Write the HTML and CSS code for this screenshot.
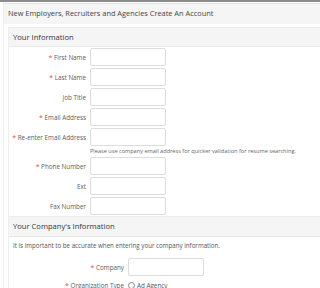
FILE: index.html
```html
<!DOCTYPE html>
<html>
<head>
<meta charset="utf-8">
<link rel="stylesheet" href="styles.css">
</head>
<body>
<div class="topbar"></div>
<div class="wrap">
  <div class="title">New Employers, Recruiters and Agencies Create An Account</div>
  <div class="panel">
    <div class="panel-heading">Your Information</div>
    <div class="form">
      <div class="row"><label><span class="req">*</span> First Name</label><span class="input"></span></div>
      <div class="row"><label><span class="req">*</span> Last Name</label><span class="input"></span></div>
      <div class="row"><label>Job Title</label><span class="input"></span></div>
      <div class="row"><label><span class="req">*</span> Email Address</label><span class="input"></span></div>
      <div class="row"><label><span class="req">*</span> Re-enter Email Address</label><span class="input"></span></div>
      <div class="hint">Please use company email address for quicker validation for resume searching.</div>
      <div class="row"><label><span class="req">*</span> Phone Number</label><span class="input"></span></div>
      <div class="row"><label>Ext</label><span class="input"></span></div>
      <div class="row"><label>Fax Number</label><span class="input"></span></div>
    </div>
    <div class="panel-heading second">Your Company's Information</div>
    <p class="note">It is important to be accurate when entering your company information.</p>
    <div class="form company">
      <div class="row"><label><span class="req">*</span> Company</label><span class="input"></span></div>
      <div class="row radio-row"><label><span class="req">*</span> Organization Type</label><span class="radio"><span class="circle"></span>Ad Agency</span></div>
    </div>
  </div>
</div>
</body>
</html>
```
FILE: styles.css
```css
html, body {
  margin: 0;
  padding: 0;
  background: #fff;
  font-family: "Open Sans", "Liberation Sans", sans-serif;
  color: #555;
  overflow: hidden;
}
.topbar {
  height: 2px;
  background: #8c8c8c;
}
.wrap {
  margin-left: 3px;
  border-left: 1px solid #ececec;
  overflow: hidden;
  height: 286px;
}
.title {
  margin-top: 1px;
  border-top: 1px solid #e4e4e4;
  background: #f5f5f5;
  height: 20px;
  line-height: 19px;
  padding-left: 4px;
  font-size: 7.4px;
  color: #444;
  white-space: nowrap;
}
.panel {
  margin: 3px 0 0 4px;
  border: 1px solid #eeeeee;
  border-right: none;
}
.panel-heading {
  background: #f5f5f5;
  border-bottom: 1px solid #e8e8e8;
  height: 18px;
  line-height: 18px;
  padding-left: 4px;
  font-size: 7.6px;
  color: #333;
}
.panel-heading.second {
  height: 19px;
  line-height: 19px;
  border-top: 1px solid #ececec;
}
.row {
  display: flex;
  align-items: center;
  height: 20px;
}
label {
  width: 77px;
  flex: none;
  text-align: right;
  font-size: 6.3px;
  color: #5c5c5c;
  padding-right: 4px;
  white-space: nowrap;
}
.req {
  color: #d9534f;
  font-size: 7px;
}
.input {
  display: block;
  width: 74px;
  height: 16px;
  border: 1px solid #dcdcdc;
  border-radius: 2px;
  background: #fff;
}
.hint {
  margin-left: 81px;
  height: 9px;
  line-height: 9px;
  font-size: 5.6px;
  color: #666;
  white-space: nowrap;
}
.note {
  margin: 0;
  padding: 4px 0 0 4px;
  height: 13px;
  line-height: 9px;
  font-size: 6.2px;
  color: #555;
  white-space: nowrap;
}
.company label {
  width: 115px;
}
.company .row {
  height: 26px;
}
.company .radio-row {
  height: 10px;
}
.radio {
  display: flex;
  align-items: center;
  font-size: 6.3px;
  color: #555;
}
.circle {
  width: 5px;
  height: 5px;
  border: 1px solid #888;
  border-radius: 50%;
  margin-right: 2px;
}
```
